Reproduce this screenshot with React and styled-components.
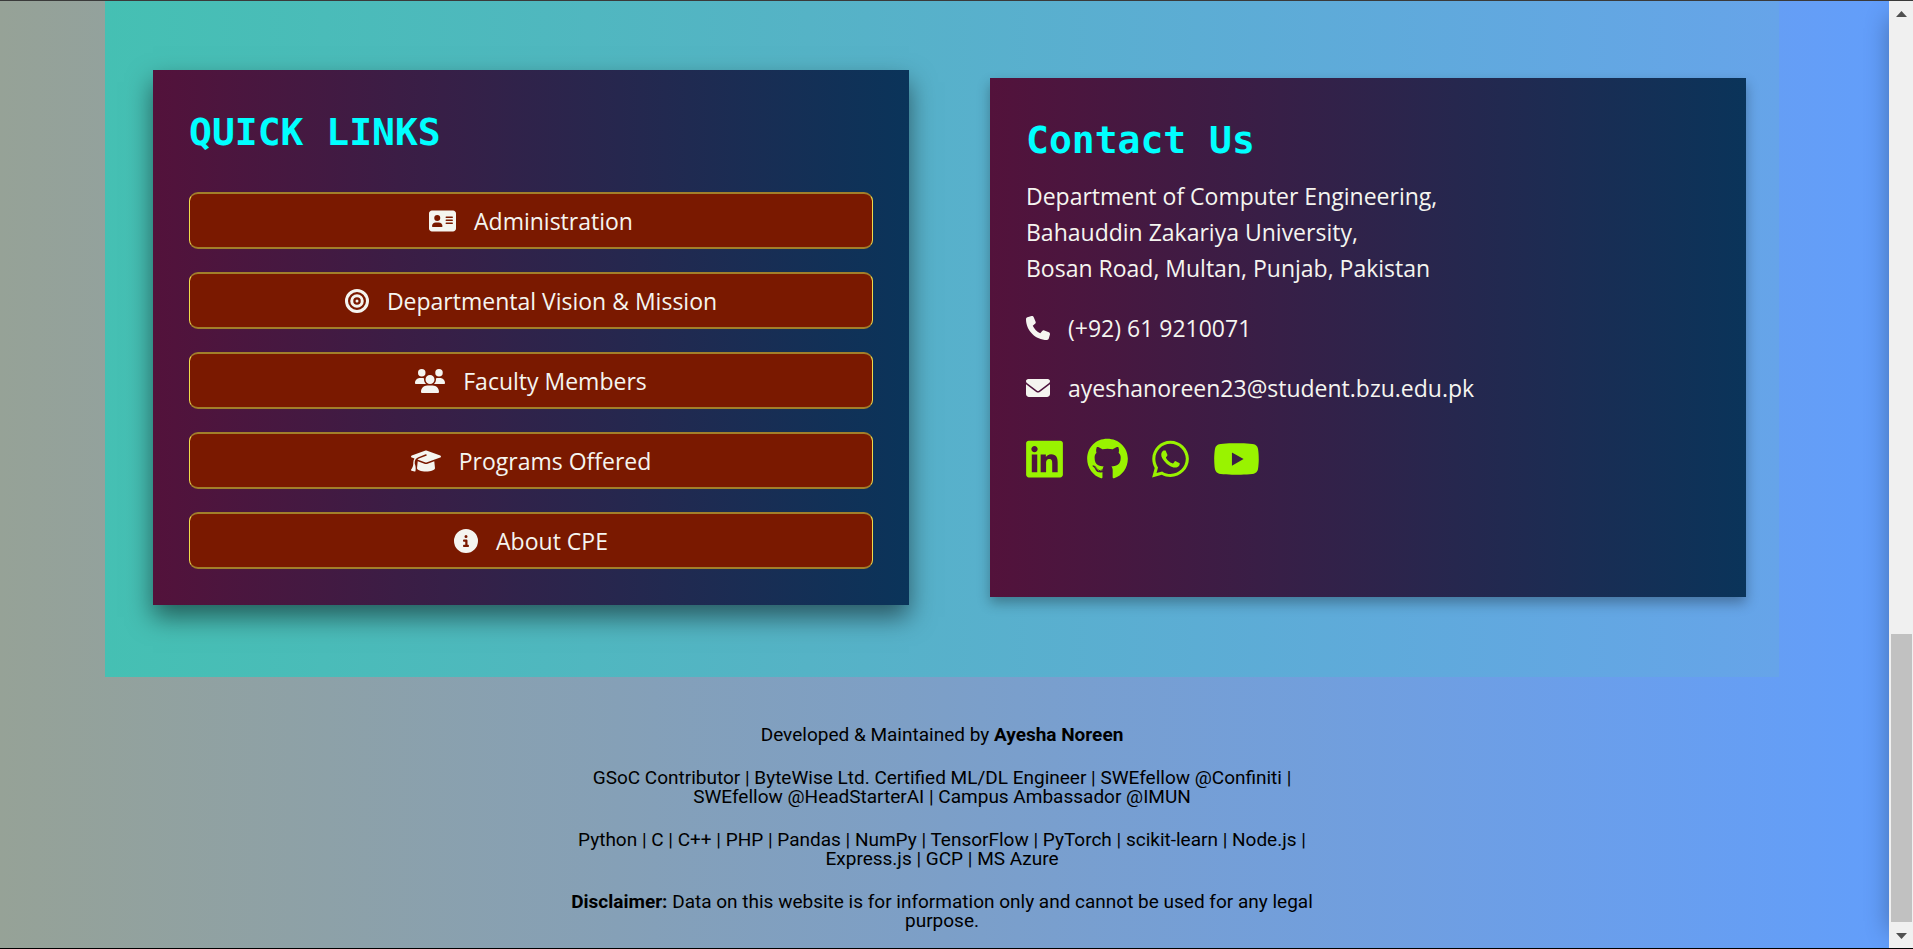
import React from "react";
import styled, { createGlobalStyle, css } from "styled-components";
import {
  FaAddressCard,
  FaBullseye,
  FaUsers,
  FaGraduationCap,
  FaCircleInfo,
  FaPhone,
  FaEnvelope,
  FaLinkedin,
  FaGithub,
  FaWhatsapp,
  FaYoutube,
} from "react-icons/fa6";

const GlobalStyle = createGlobalStyle`
  * {
    box-sizing: border-box;
  }
  body {
    margin: 0;
    overflow: hidden;
    background: #000;
  }
`;

const Window = styled.div`
  display: flex;
  height: 100vh;
  border-top: 1px solid #3a3a3a;
  border-bottom: 1px solid #000;
`;

const Page = styled.div`
  flex: 1;
  min-width: 0;
  overflow: hidden;
  position: relative;
  padding: 0 110px 0 105px;
  background: linear-gradient(to right, #96a297, #7c9fc8 50%, #629efb);
`;

const EdgeShadow = styled.div`
  position: absolute;
  top: 16px;
  bottom: 16px;
  left: 100%;
  width: 24px;
  box-shadow: 0 0 24px rgba(0, 0, 0, 0.3);
`;

const Panels = styled.section`
  display: grid;
  grid-template-columns: 1fr 1fr;
  align-items: center;
  padding: 69px 0 72px;
  background: linear-gradient(to right, #45c0b3, #55b3c6 42%, #66a4e9);
`;

const Card = styled.div`
  margin: 0 33px 0 48px;
  padding: 36px;
  min-height: 519px;
  color: #f5f5f0;
  font-family: "Open Sans", "Noto Sans", sans-serif;
  font-size: 23px;
  line-height: 36px;
  background: linear-gradient(to right, #53123b, #0a345a);
  box-shadow: 0 6px 12px rgba(0, 0, 0, 0.3);
  ${(p) =>
    p.$raised &&
    css`
      box-shadow: 0 12px 24px rgba(0, 0, 0, 0.5);
    `}
`;

const Title = styled.h2`
  margin: 0 0 12px;
  color: #00ffff;
  font-family: "DejaVu Sans Mono", monospace;
  font-size: 38px;
  font-weight: 700;
  line-height: 52px;
`;

const LinkList = styled.nav`
  display: grid;
  gap: 23px;
  padding-top: 22px;
`;

/* Square glyphs by default; wider ones get their own width. */
const Glyph = styled.span`
  display: flex;
  flex: none;

  svg {
    width: ${(p) => p.$width || 24}px;
    height: ${(p) => p.$height || 24}px;
  }
`;

const LinkButton = styled.a`
  display: flex;
  align-items: center;
  justify-content: center;
  gap: 18px;
  height: 57px;
  color: inherit;
  text-decoration: none;
  background: #7a1900;
  border: solid;
  border-width: 2px 1px;
  border-color: #a27f2a #f0dc4a;
  border-radius: 9px;
`;

const Address = styled.address`
  padding-bottom: 24px;
  font-style: normal;
`;

const ContactRow = styled.div`
  display: flex;
  align-items: center;
  gap: 18px;
  padding-bottom: 24px;
`;

const Socials = styled.div`
  display: flex;
  gap: 24px;
  padding-top: 8px;
`;

const SocialLink = styled.a`
  color: #99f300;
`;

const Footer = styled.footer`
  max-width: 768px;
  margin: 0 auto;
  padding-top: 48px;
  color: #000;
  font-family: Roboto, sans-serif;
  font-size: 19px;
  line-height: 19px;
  text-align: center;

  p {
    margin: 0 0 24px;
  }
`;

const ScrollTrack = styled.div`
  display: flex;
  flex-direction: column;
  align-items: center;
  width: 24px;
  padding: 10px 0 9px;
  background: #f0f0f0;
`;

const Arrow = styled.svg`
  width: 11px;
  height: 6px;
`;

const Thumb = styled.div`
  width: 21px;
  height: 31%;
  margin: auto 0 11px;
  background: #c1c1c1;
`;

const links = [
  [FaAddressCard, 27, "Administration"],
  [FaBullseye, 24, "Departmental Vision & Mission"],
  [FaUsers, 30, "Faculty Members"],
  [FaGraduationCap, 30, "Programs Offered"],
  [FaCircleInfo, 24, "About CPE"],
];

const socials = [
  [FaLinkedin, 37, "LinkedIn"],
  [FaGithub, 41, "GitHub"],
  [FaWhatsapp, 37, "WhatsApp"],
  [FaYoutube, 47, "YouTube"],
];

export default function App() {
  return (
    <>
      <GlobalStyle />
      <Window>
        <Page>
          <Panels>
            <Card $raised>
              <Title>QUICK LINKS</Title>
              <LinkList>
                {links.map(([Icon, width, label]) => (
                  <LinkButton href="#" key={label}>
                    <Glyph $width={width}>
                      <Icon />
                    </Glyph>
                    {label}
                  </LinkButton>
                ))}
              </LinkList>
            </Card>
            <Card>
              <Title>Contact Us</Title>
              <Address>
                Department of Computer Engineering,
                <br />
                Bahauddin Zakariya University,
                <br />
                Bosan Road, Multan, Punjab, Pakistan
              </Address>
              <ContactRow>
                <Glyph>
                  <FaPhone />
                </Glyph>
                (+92) 61 9210071
              </ContactRow>
              <ContactRow>
                <Glyph>
                  <FaEnvelope />
                </Glyph>
                ayeshanoreen23@student.bzu.edu.pk
              </ContactRow>
              <Socials>
                {socials.map(([Icon, width, name]) => (
                  <SocialLink href="#" aria-label={name} key={name}>
                    <Glyph $width={width} $height={42}>
                      <Icon />
                    </Glyph>
                  </SocialLink>
                ))}
              </Socials>
            </Card>
          </Panels>
          <Footer>
            <p>
              Developed &amp; Maintained by <strong>Ayesha Noreen</strong>
            </p>
            <p>
              GSoC Contributor | ByteWise Ltd. Certified ML/DL Engineer |
              SWEfellow @Confiniti | SWEfellow @HeadStarterAI | Campus
              Ambassador @IMUN
            </p>
            <p>
              Python | C | C++ | PHP | Pandas | NumPy | TensorFlow | PyTorch |
              scikit-learn | Node.js | Express.js | GCP | MS Azure
            </p>
            <p>
              <strong>Disclaimer:</strong> Data on this website is for
              information only and cannot be used for any legal purpose.
            </p>
          </Footer>
          <EdgeShadow />
        </Page>
        <ScrollTrack>
          <Arrow viewBox="0 0 11 6">
            <path d="M0 6L5.5 0L11 6Z" fill="#505050" />
          </Arrow>
          <Thumb />
          <Arrow viewBox="0 0 11 6">
            <path d="M0 0L5.5 6L11 0Z" fill="#505050" />
          </Arrow>
        </ScrollTrack>
      </Window>
    </>
  );
}
